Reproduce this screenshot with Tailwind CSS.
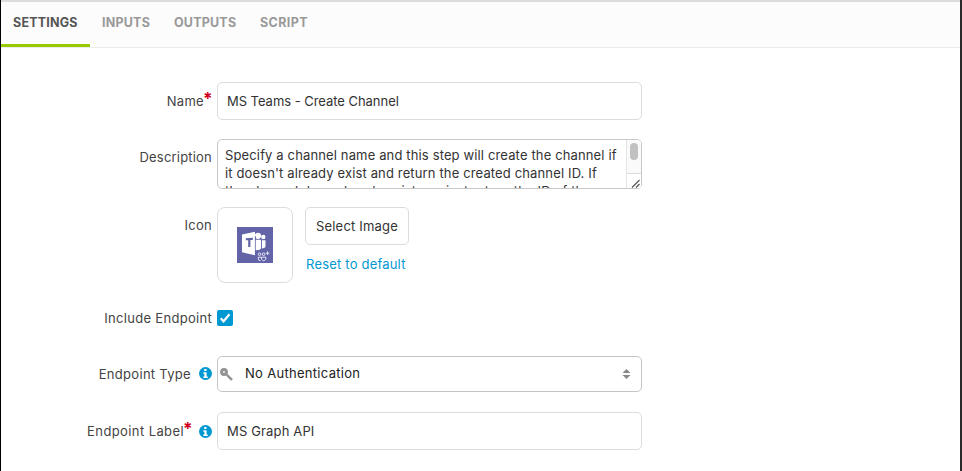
<!DOCTYPE html>
<html lang="en">
<head>
<meta charset="utf-8">
<title>Step settings</title>
<script src="https://cdn.jsdelivr.net/npm/@tailwindcss/browser@4"></script>
</head>
<body class="bg-white">
<div class="w-[962px] h-[471px] overflow-hidden flex flex-col bg-white border-l border-l-black border-r-2 border-r-[#2a2a2a] font-['Inter',sans-serif] text-[13px] leading-[18px] tracking-[0.3px] text-[#444]">
  <nav class="h-12 shrink-0 flex bg-[#fcfcfc] border-t-2 border-t-[#dcdcdc] border-b border-b-[#ececec] text-[12.5px] font-bold text-[#999]">
    <a class="w-[89px] h-[45px] shrink-0 pl-3 pt-3 border-b-3 border-b-[#97ca00] text-[#555] tracking-[0.2px]">SETTINGS</a>
    <a class="w-[72px] pl-3 pt-3 tracking-[0.2px]">INPUTS</a>
    <a class="w-[86px] pl-3 pt-3 tracking-[0.2px]">OUTPUTS</a>
    <a class="pl-3 pt-3 tracking-[0.4px]">SCRIPT</a>
  </nav>

  <form class="pt-[34px] grid grid-cols-[211px_425px] gap-x-[5px]">
    <label class="h-[57px] pt-[10px] flex justify-end">Name<span class="w-2 text-center text-[17px] font-bold text-[#d0021b] tracking-normal -mt-[2px] -ml-px mr-px">*</span></label>
    <div class="h-[38px] rounded-[5px] border border-[#dcdcdc] pl-[9px] pt-[9px] text-[#333] tracking-[-0.04px]">MS Teams - Create Channel</div>

    <label class="h-[68px] pt-[9px] text-right tracking-[0.2px]">Description</label>
    <div class="h-[50px] rounded-[5px] border border-[#c8c8c8] flex overflow-hidden text-[#333]">
      <div class="grow h-12 overflow-hidden pl-[7px] pt-[6px] whitespace-nowrap tracking-[0.14px]">Specify a channel name and this step will create the channel if<br>it doesn't already exist and return the created channel ID. If<br>the channel does already exist, we just return the ID of the</div>
      <div class="w-[15px] shrink-0 bg-[#fafafa] border-l border-l-[#e4e4e4] flex flex-col items-center pt-[3px]">
        <div class="w-2 h-[17px] rounded-full bg-[#c1c1c1]"></div>
        <div class="mt-[13px] w-full h-[15px] border-t border-t-[#dcdcdc] bg-white">
          <svg class="block w-[14px] h-[14px]" viewBox="0 0 14 14" fill="none" stroke="#555" stroke-width="1.200"><path d="M5 13.500L12.500 6M9 13.500l3.500-3.500"/></svg>
        </div>
      </div>
    </div>

    <label class="h-[103px] pt-[9px] text-right">Icon</label>
    <div class="flex gap-3">
      <div class="w-[76px] h-[76px] rounded-[8px] border border-[#dcdcdc] flex items-center justify-center">
        <svg class="w-9 h-9" viewBox="0 0 36 36">
          <rect width="36" height="36" fill="#6264a7"/>
          <g fill="#fff">
            <circle cx="21" cy="8.800" r="3.100"/>
            <circle cx="26.300" cy="10" r="2.200"/>
            <path d="M18 12.800h6v8.700q-1.500 2.200-6 1.800zM24.900 13.200h3.600v6.500q-1 1.800-3.600 1.800z"/>
            <path d="M5 7.500L18 4.800v23.400L5 25.300z"/>
          </g>
          <path d="M18.400 9v18" stroke="#6264a7" stroke-width=".8"/>
          <path d="M8.800 11.300l7-.6v2.300l-2.400.1v7l-2.200-.1v-6.800l-2.400.1z" fill="#6264a7"/>
          <g fill="none" stroke="#e5e5f4" stroke-width="1">
            <circle cx="22.600" cy="27.200" r="1.300"/><circle cx="26.600" cy="27.200" r="1.300"/>
            <path d="M24 30.200h-2.700v2q0 1.500 2.200 1.500M24.500 30.200h4.300v2q-2 3.200-4.300 0zM28.800 26.200h3.600M30.600 24.400V28"/>
          </g>
        </svg>
      </div>
      <div>
        <button type="button" class="block w-[104px] h-[38px] rounded-[5px] border border-[#dcdcdc] text-[#333] tracking-[0.2px] pb-px whitespace-nowrap">Select Image</button>
        <a class="block pl-px pt-[10px] text-[#0098d1] tracking-[0.2px] whitespace-nowrap">Reset to default</a>
      </div>
    </div>

    <label class="h-[46px] -mt-px text-right">Include Endpoint</label>
    <div class="w-4 h-4 rounded-[2px] bg-[#0098d1]">
      <svg class="block w-4 h-4" viewBox="0 0 16 16" fill="none" stroke="#fff" stroke-width="2.200"><path d="M3.700 8.300l2.900 3 5.900-7"/></svg>
    </div>

    <label class="h-[56px] mt-px pt-[9px] flex justify-end gap-2"><span>Endpoint Type</span>
      <svg class="w-[13px] h-[13px] mt-[2px]" viewBox="0 0 13 13"><circle cx="6.500" cy="6.500" r="6.500" fill="#0098d1"/><path d="M5.200 2h2.300v2H5.200zM4.300 5.200h3.300v4.300h1.100v1.500H4.300V9.500h1.100V6.700H4.300z" fill="#fff"/></svg>
    </label>
    <div class="mt-px h-9 rounded-[5px] border border-[#c4c4c4] flex items-center pl-[2px] pr-[10px] text-[#222]">
      <svg class="w-[13px] h-[13px] shrink-0" viewBox="0 0 13 13" fill="none" stroke="#949494"><circle cx="4" cy="4" r="2.400" stroke-width="3"/><path d="M5.500 5.500l6.600 6.400" stroke-width="2.300"/><path d="M8 9.800l1.600-1.600M10 11.700l1.300-1.300" stroke-width="1.400"/></svg>
      <span class="ml-3 grow -mt-[2px]">No Authentication</span>
      <svg class="w-[9px] h-[10px]" viewBox="0 0 9 10" fill="#888"><path d="M4.500 0L8.500 4h-8zM4.500 10L.5 6h8z"/></svg>
    </div>

    <label class="pt-[10px] flex justify-end"><span class="tracking-[0.4px]">Endpoint Label</span><span class="w-2 text-center text-[17px] font-bold text-[#d0021b] tracking-normal -mt-[2px] -ml-px mr-px">*</span>
      <svg class="ml-[7px] w-[13px] h-[13px] mt-[3px]" viewBox="0 0 13 13"><circle cx="6.500" cy="6.500" r="6.500" fill="#0098d1"/><path d="M5.200 2h2.300v2H5.200zM4.300 5.200h3.300v4.300h1.100v1.500H4.300V9.500h1.100V6.700H4.300z" fill="#fff"/></svg>
    </label>
    <div class="h-[38px] rounded-[5px] border border-[#dcdcdc] pl-[9px] pt-[9px] text-[#333] tracking-[0.15px]">MS Graph API</div>
  </form>
</div>
</body>
</html>
